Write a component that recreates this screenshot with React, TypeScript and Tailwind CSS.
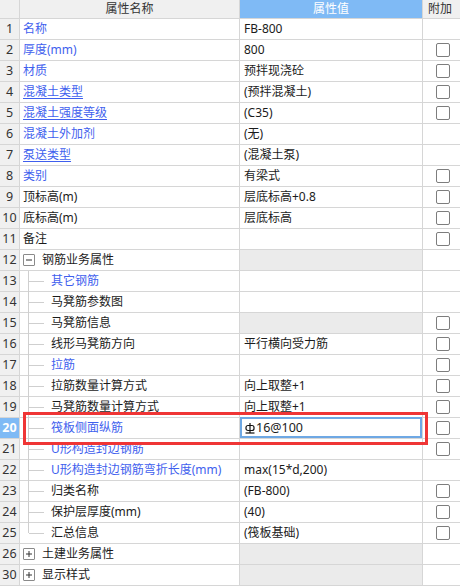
import React from "react";

type Row = {
  no: number;
  name: string;
  value?: string;
  blue?: boolean;
  underline?: boolean;
  check?: boolean;
  level?: "top" | "group" | "child" | "last";
  open?: boolean;
  grayValue?: boolean;
  selected?: boolean;
};

const rows: Row[] = [
  { no: 1, name: "名称", value: "FB-800", blue: true },
  { no: 2, name: "厚度(mm)", value: "800", blue: true, check: true },
  { no: 3, name: "材质", value: "预拌现浇砼", blue: true, check: true },
  { no: 4, name: "混凝土类型", value: "(预拌混凝土)", blue: true, underline: true, check: true },
  { no: 5, name: "混凝土强度等级", value: "(C35)", blue: true, underline: true, check: true },
  { no: 6, name: "混凝土外加剂", value: "(无)", blue: true },
  { no: 7, name: "泵送类型", value: "(混凝土泵)", blue: true, underline: true },
  { no: 8, name: "类别", value: "有梁式", blue: true, check: true },
  { no: 9, name: "顶标高(m)", value: "层底标高+0.8", check: true },
  { no: 10, name: "底标高(m)", value: "层底标高", check: true },
  { no: 11, name: "备注", value: "", check: true },
  { no: 12, name: "钢筋业务属性", level: "group", open: true, grayValue: true },
  { no: 13, name: "其它钢筋", blue: true, level: "child" },
  { no: 14, name: "马凳筋参数图", level: "child" },
  { no: 15, name: "马凳筋信息", level: "child", grayValue: true, check: true },
  { no: 16, name: "线形马凳筋方向", value: "平行横向受力筋", level: "child", check: true },
  { no: 17, name: "拉筋", blue: true, level: "child", check: true },
  { no: 18, name: "拉筋数量计算方式", value: "向上取整+1", level: "child", check: true },
  { no: 19, name: "马凳筋数量计算方式", value: "向上取整+1", level: "child", check: true },
  { no: 20, name: "筏板侧面纵筋", value: "16@100", blue: true, level: "child", check: true, selected: true },
  { no: 21, name: "U形构造封边钢筋", blue: true, level: "child", check: true },
  { no: 22, name: "U形构造封边钢筋弯折长度(mm)", value: "max(15*d,200)", blue: true, level: "child" },
  { no: 23, name: "归类名称", value: "(FB-800)", level: "child", check: true },
  { no: 24, name: "保护层厚度(mm)", value: "(40)", level: "child", check: true },
  { no: 25, name: "汇总信息", value: "(筏板基础)", level: "last", check: true },
  { no: 26, name: "土建业务属性", level: "group", grayValue: true },
  { no: 30, name: "显示样式", level: "group", grayValue: true },
];

function Toggle({ open }: { open?: boolean }) {
  return (
    <span className="w-[12px] h-[12px] border border-[#8a8a8a] bg-white rounded-[1px] flex items-center justify-center shrink-0">
      <svg width="8" height="8" viewBox="0 0 8 8">
        <line x1="1" y1="4" x2="7" y2="4" stroke="#333" strokeWidth="1" />
        {!open && <line x1="4" y1="1" x2="4" y2="7" stroke="#333" strokeWidth="1" />}
      </svg>
    </span>
  );
}

// HRB400 rebar grade mark
function RebarMark() {
  return (
    <svg width="10" height="11" viewBox="0 0 10 11" className="mr-[1px] shrink-0">
      <rect x="1" y="2.5" width="8" height="5" rx="2" fill="none" stroke="#111" strokeWidth="1.2" />
      <line x1="5" y1="0" x2="5" y2="10" stroke="#111" strokeWidth="1.2" />
      <line x1="0.5" y1="10" x2="9.5" y2="10" stroke="#111" strokeWidth="1.2" />
    </svg>
  );
}

function Checkbox() {
  return <span className="block w-[14px] h-[14px] border border-[#7d7d7d] rounded-[2px] bg-white" />;
}

const cell = "h-[21px] border-b border-r border-[#d6d6d6] flex items-center";

export default function App() {
  return (
    <div
      className="relative w-[460px] h-[587px] overflow-hidden bg-white text-[12px] text-[#1b1b1b]"
      style={{ fontFamily: "'Noto Sans', 'Noto Sans CJK SC', sans-serif" }}
    >
      {/* header */}
      <div className="grid grid-cols-[20px_220px_183px_37px]">
        <div className="h-[19px] bg-[#f0f0f0] border-b border-r border-[#d6d6d6]" />
        <div className="h-[19px] bg-[#f0f0f0] border-b border-r border-[#d6d6d6] flex items-center justify-center text-[#333] leading-none">
          属性名称
        </div>
        <div className="h-[19px] bg-[#7fbaf5] border-b border-r border-[#d6d6d6] flex items-center justify-center text-white leading-none">
          属性值
        </div>
        <div className="h-[19px] bg-[#f0f0f0] border-b border-[#d6d6d6] flex items-center pl-[5px] text-[#333] leading-none whitespace-nowrap">
          附加
        </div>
      </div>

      {rows.map((r) => {
        const textColor = r.blue ? "text-[#3f5fee]" : "text-[#1b1b1b]";
        return (
          <div key={r.no} className="grid grid-cols-[20px_220px_183px_37px] leading-none">
            <div
              className={
                cell +
                " justify-center text-[12.5px] " +
                (r.selected ? "bg-[#7fbaf5] text-white font-bold" : "bg-[#f0f0f0] text-[#333]")
              }
            >
              {r.no}
            </div>

            <div className={cell + " relative whitespace-nowrap"}>
              {r.level === "group" && (
                <div className="flex items-center gap-[7px] pl-[3px]">
                  <Toggle open={r.open} />
                  <span>{r.name}</span>
                </div>
              )}
              {(r.level === "child" || r.level === "last") && (
                <>
                  <span
                    className={
                      "absolute left-[8px] w-px bg-[#cfcfcf] " +
                      (r.level === "last" ? "top-0 h-[10px]" : "top-0 bottom-[-1px]")
                    }
                  />
                  <span className="absolute left-[9px] top-[10px] w-[15px] h-px bg-[#cfcfcf]" />
                  <span className={"pl-[31px] " + textColor}>{r.name}</span>
                </>
              )}
              {!r.level && (
                <span className={"pl-[3px] " + textColor + (r.underline ? " underline underline-offset-[2px]" : "")}>
                  {r.name}
                </span>
              )}
            </div>

            <div className={cell + " relative whitespace-nowrap " + (r.grayValue ? "bg-[#ebebeb]" : "")}>
              {r.selected ? (
                <>
                  <span className="absolute left-0 right-0 top-[-1px] bottom-0 border-2 border-[#6ea8e4]" />
                  <span className="flex items-center pl-[5px] text-[12.5px]">
                    <RebarMark />
                    {r.value}
                  </span>
                </>
              ) : (
                <span className="pl-[4px]">{r.value}</span>
              )}
            </div>

            <div className="h-[21px] border-b border-[#d6d6d6] flex items-center pl-[13px]">
              {r.check && <Checkbox />}
            </div>
          </div>
        );
      })}

      {/* highlight frame */}
      <div className="absolute left-[23px] top-[412px] w-[405px] h-[33px] border-[3px] border-[#ef3535] pointer-events-none" />
    </div>
  );
}
